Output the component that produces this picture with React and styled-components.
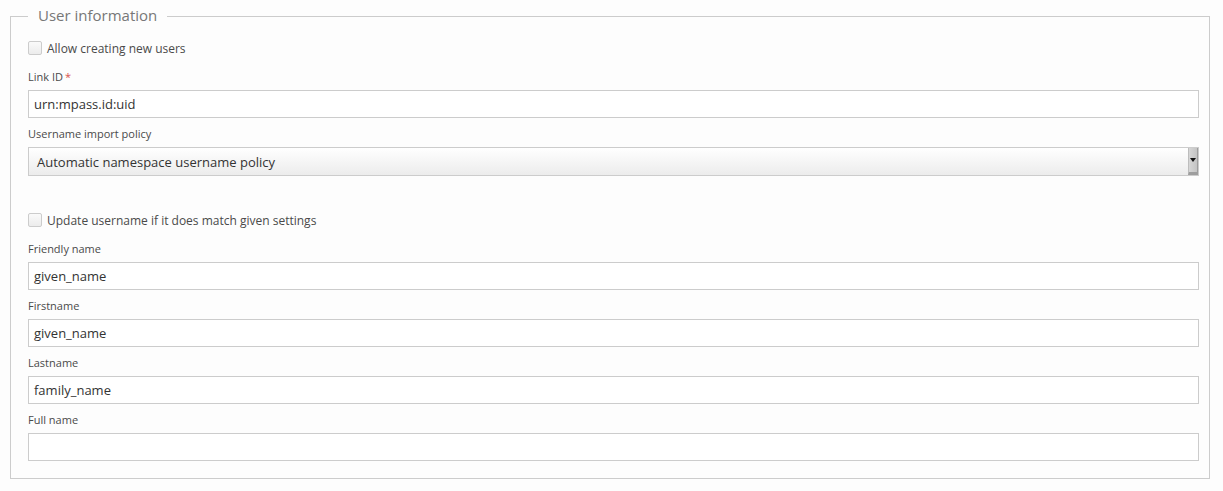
import React from "react";
import styled, { createGlobalStyle } from "styled-components";

const GlobalStyle = createGlobalStyle`
  html, body {
    margin: 0;
    background: #fdfdfd;
    font-family: "Open Sans", "Liberation Sans", sans-serif;
    color: #333333;
  }
`;

const Page = styled.div`
  padding: 5px 13px 13px 10px;
`;

const Fieldset = styled.fieldset`
  margin: 0;
  border: 1px solid #cccccc;
  padding: 12px 10px 17px 17px;
  min-width: 0;
`;

const Legend = styled.legend`
  padding: 0 10px 3px;
  font-size: 15px;
  line-height: 20px;
  color: #777777;
`;

const CheckRow = styled.label`
  display: flex;
  align-items: center;
  gap: 5px;
  height: 16px;
  margin-bottom: 13px;
  font-size: 12px;
  color: #4a4a4a;
`;

const CheckBox = styled.span`
  box-sizing: border-box;
  width: 14px;
  height: 14px;
  border: 1px solid #cccccc;
  border-radius: 2px;
  background: linear-gradient(#fafafa, #ececec);
`;

const Group = styled.div`
  margin-bottom: ${(p) => (p.$last ? 0 : p.$gap || 8)}px;
`;

const Label = styled.div`
  font-size: 11px;
  line-height: 16px;
  margin-bottom: 5px;
  color: #4a4a4a;
`;

const Required = styled.span`
  color: #d9534f;
  margin-left: 2px;
`;

const Input = styled.div`
  box-sizing: border-box;
  height: 28px;
  border: 1px solid #cccccc;
  background: #ffffff;
  padding: 0 5px;
  display: flex;
  align-items: center;
  font-size: 13px;
  color: #333333;
`;

const Select = styled.div`
  box-sizing: border-box;
  height: 29px;
  border: 1px solid #cccccc;
  background: linear-gradient(#ffffff, #ececec);
  padding: 0 0 0 8px;
  display: flex;
  align-items: center;
  justify-content: space-between;
  font-size: 13px;
  color: #333333;
`;

const SelectButton = styled.span`
  box-sizing: border-box;
  width: 10px;
  height: 27px;
  background: linear-gradient(90deg, #d6d6d6, #c4c4c4);
  border-left: 1px solid #bdbdbd;
  border-bottom: 3px solid #9e9e9e;
  border-right: 1px solid #9e9e9e;
  display: flex;
  align-items: center;
  justify-content: center;
`;

const Arrow = styled.span`
  width: 0;
  height: 0;
  border-left: 3px solid transparent;
  border-right: 3px solid transparent;
  border-top: 4px solid #111111;
`;

const fields = [
  { label: "Friendly name", value: "given_name" },
  { label: "Firstname", value: "given_name" },
  { label: "Lastname", value: "family_name" },
  { label: "Full name", value: "" },
];

export default function App() {
  return (
    <>
      <GlobalStyle />
      <Page>
        <Fieldset>
          <Legend>User information</Legend>
          <CheckRow>
            <CheckBox />
            Allow creating new users
          </CheckRow>
          <Group>
            <Label>
              Link ID<Required>*</Required>
            </Label>
            <Input>urn:mpass.id:uid</Input>
          </Group>
          <Group $gap={36}>
            <Label>Username import policy</Label>
            <Select>
              Automatic namespace username policy
              <SelectButton>
                <Arrow />
              </SelectButton>
            </Select>
          </Group>
          <CheckRow>
            <CheckBox />
            Update username if it does match given settings
          </CheckRow>
          {fields.map((f, i) => (
            <Group key={f.label} $last={i === fields.length - 1}>
              <Label>{f.label}</Label>
              <Input>{f.value}</Input>
            </Group>
          ))}
        </Fieldset>
      </Page>
    </>
  );
}
